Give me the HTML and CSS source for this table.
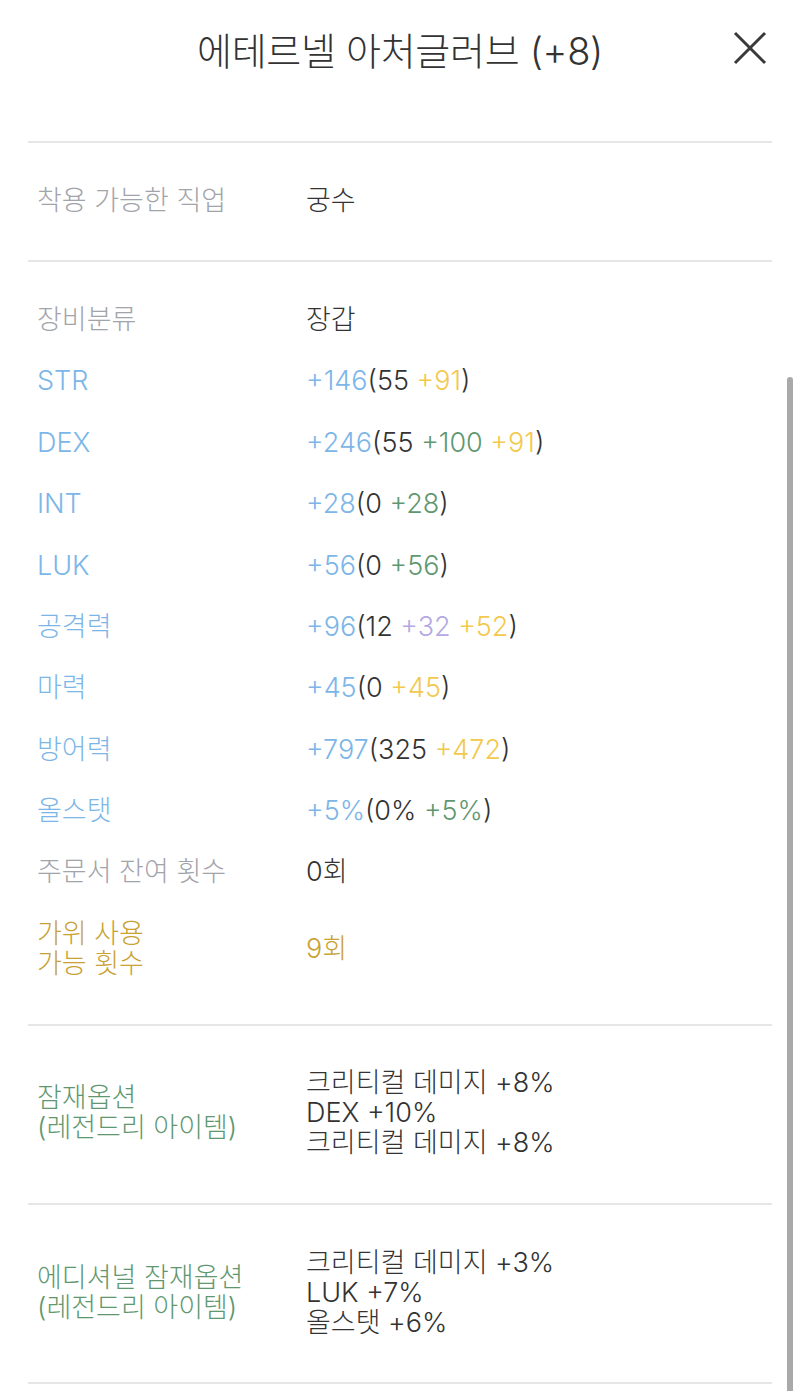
FILE: index.html
```html
<!DOCTYPE html>
<html lang="ko">
<head>
    <meta charset="UTF-8">
    <meta name="viewport" content="width=device-width, initial-scale=1.0">
    <title>에테르넬 아처글러브 (+8)</title>
    <link rel="stylesheet" href="styles.css">
</head>
<body>
    <div class="header">
        <span></span>
        <h1 class="title">에테르넬 아처글러브 (+8)</h1>
        <button class="close" aria-label="닫기">
            <svg width="34" height="34" viewBox="0 0 34 34">
                <path d="M2 2 L32 32 M32 2 L2 32" stroke="#3a3a3a" stroke-width="3" fill="none"/>
            </svg>
        </button>
    </div>

    <div class="detail">
        <div class="section">
            <div class="row">
                <div class="label gray">착용 가능한 직업</div>
                <div class="value">궁수</div>
            </div>
        </div>

        <div class="section">
            <div class="row">
                <div class="label gray">장비분류</div>
                <div class="value">장갑</div>
            </div>
            <div class="row">
                <div class="label blue">STR</div>
                <div class="value"><span class="blue">+146</span>(55 <span class="yellow">+91</span>)</div>
            </div>
            <div class="row">
                <div class="label blue">DEX</div>
                <div class="value"><span class="blue">+246</span>(55 <span class="green">+100</span> <span class="yellow">+91</span>)</div>
            </div>
            <div class="row">
                <div class="label blue">INT</div>
                <div class="value"><span class="blue">+28</span>(0 <span class="green">+28</span>)</div>
            </div>
            <div class="row">
                <div class="label blue">LUK</div>
                <div class="value"><span class="blue">+56</span>(0 <span class="green">+56</span>)</div>
            </div>
            <div class="row">
                <div class="label blue">공격력</div>
                <div class="value"><span class="blue">+96</span>(12 <span class="purple">+32</span> <span class="yellow">+52</span>)</div>
            </div>
            <div class="row">
                <div class="label blue">마력</div>
                <div class="value"><span class="blue">+45</span>(0 <span class="yellow">+45</span>)</div>
            </div>
            <div class="row">
                <div class="label blue">방어력</div>
                <div class="value"><span class="blue">+797</span>(325 <span class="yellow">+472</span>)</div>
            </div>
            <div class="row">
                <div class="label blue">올스탯</div>
                <div class="value"><span class="blue">+5%</span>(0% <span class="green">+5%</span>)</div>
            </div>
            <div class="row">
                <div class="label gray">주문서 잔여 횟수</div>
                <div class="value">0회</div>
            </div>
            <div class="row multi">
                <div class="label gold">가위 사용<br>가능 횟수</div>
                <div class="value gold">9회</div>
            </div>
        </div>

        <div class="section">
            <div class="row multi">
                <div class="label green">잠재옵션<br>(레전드리 아이템)</div>
                <div class="value">크리티컬 데미지 +8%<br>DEX +10%<br>크리티컬 데미지 +8%</div>
            </div>
        </div>

        <div class="section">
            <div class="row multi">
                <div class="label green">에디셔널 잠재옵션<br>(레전드리 아이템)</div>
                <div class="value">크리티컬 데미지 +3%<br>LUK +7%<br>올스탯 +6%</div>
            </div>
        </div>
    </div>

    <div class="scrollbar"></div>
</body>
</html>
```

FILE: styles.css
```css
*{
    margin: 0;
    padding: 0;
    box-sizing: border-box;
}
body{
    background-color: #fff;
    font-family: "Inter", "Noto Sans CJK KR", sans-serif;
    font-weight: 300;
    color: #333;
}
.header{
    height: 96px;
    margin-bottom: 45px;
    display: grid;
    grid-template-columns: 1fr auto 1fr;
    align-items: center;
}
.title{
    font-size: 38px;
    font-weight: 300;
    color: #333;
    letter-spacing: -0.3px;
}
.close{
    justify-self: end;
    margin-right: 33px;
    width: 34px;
    height: 34px;
    border: none;
    background: none;
    display: flex;
}
.detail{
    margin: 0 28px;
    border-top: 2px solid #e6e6e6;
}
.section{
    padding: 27px 0 29px;
    border-bottom: 2px solid #e6e6e6;
}
.row{
    display: grid;
    grid-template-columns: 269px 1fr;
    align-items: center;
    padding: 12.7px 0 12.7px 9px;
    font-size: 27px;
    line-height: 36px;
}
.row.multi{
    line-height: 30px;
    padding-top: 15.7px;
    padding-bottom: 15.7px;
}
.gray{
    color: #a2a4ab;
}
.blue{
    color: #7cb6e8;
}
.yellow{
    color: #f2c94c;
}
.green{
    color: #5f9870;
}
.purple{
    color: #b3a9e4;
}
.gold{
    color: #c9a232;
}
.scrollbar{
    position: fixed;
    right: 7px;
    top: 377px;
    bottom: 0;
    width: 6px;
    border-radius: 3px 3px 0 0;
    background-color: #a9a9a9;
}
```
